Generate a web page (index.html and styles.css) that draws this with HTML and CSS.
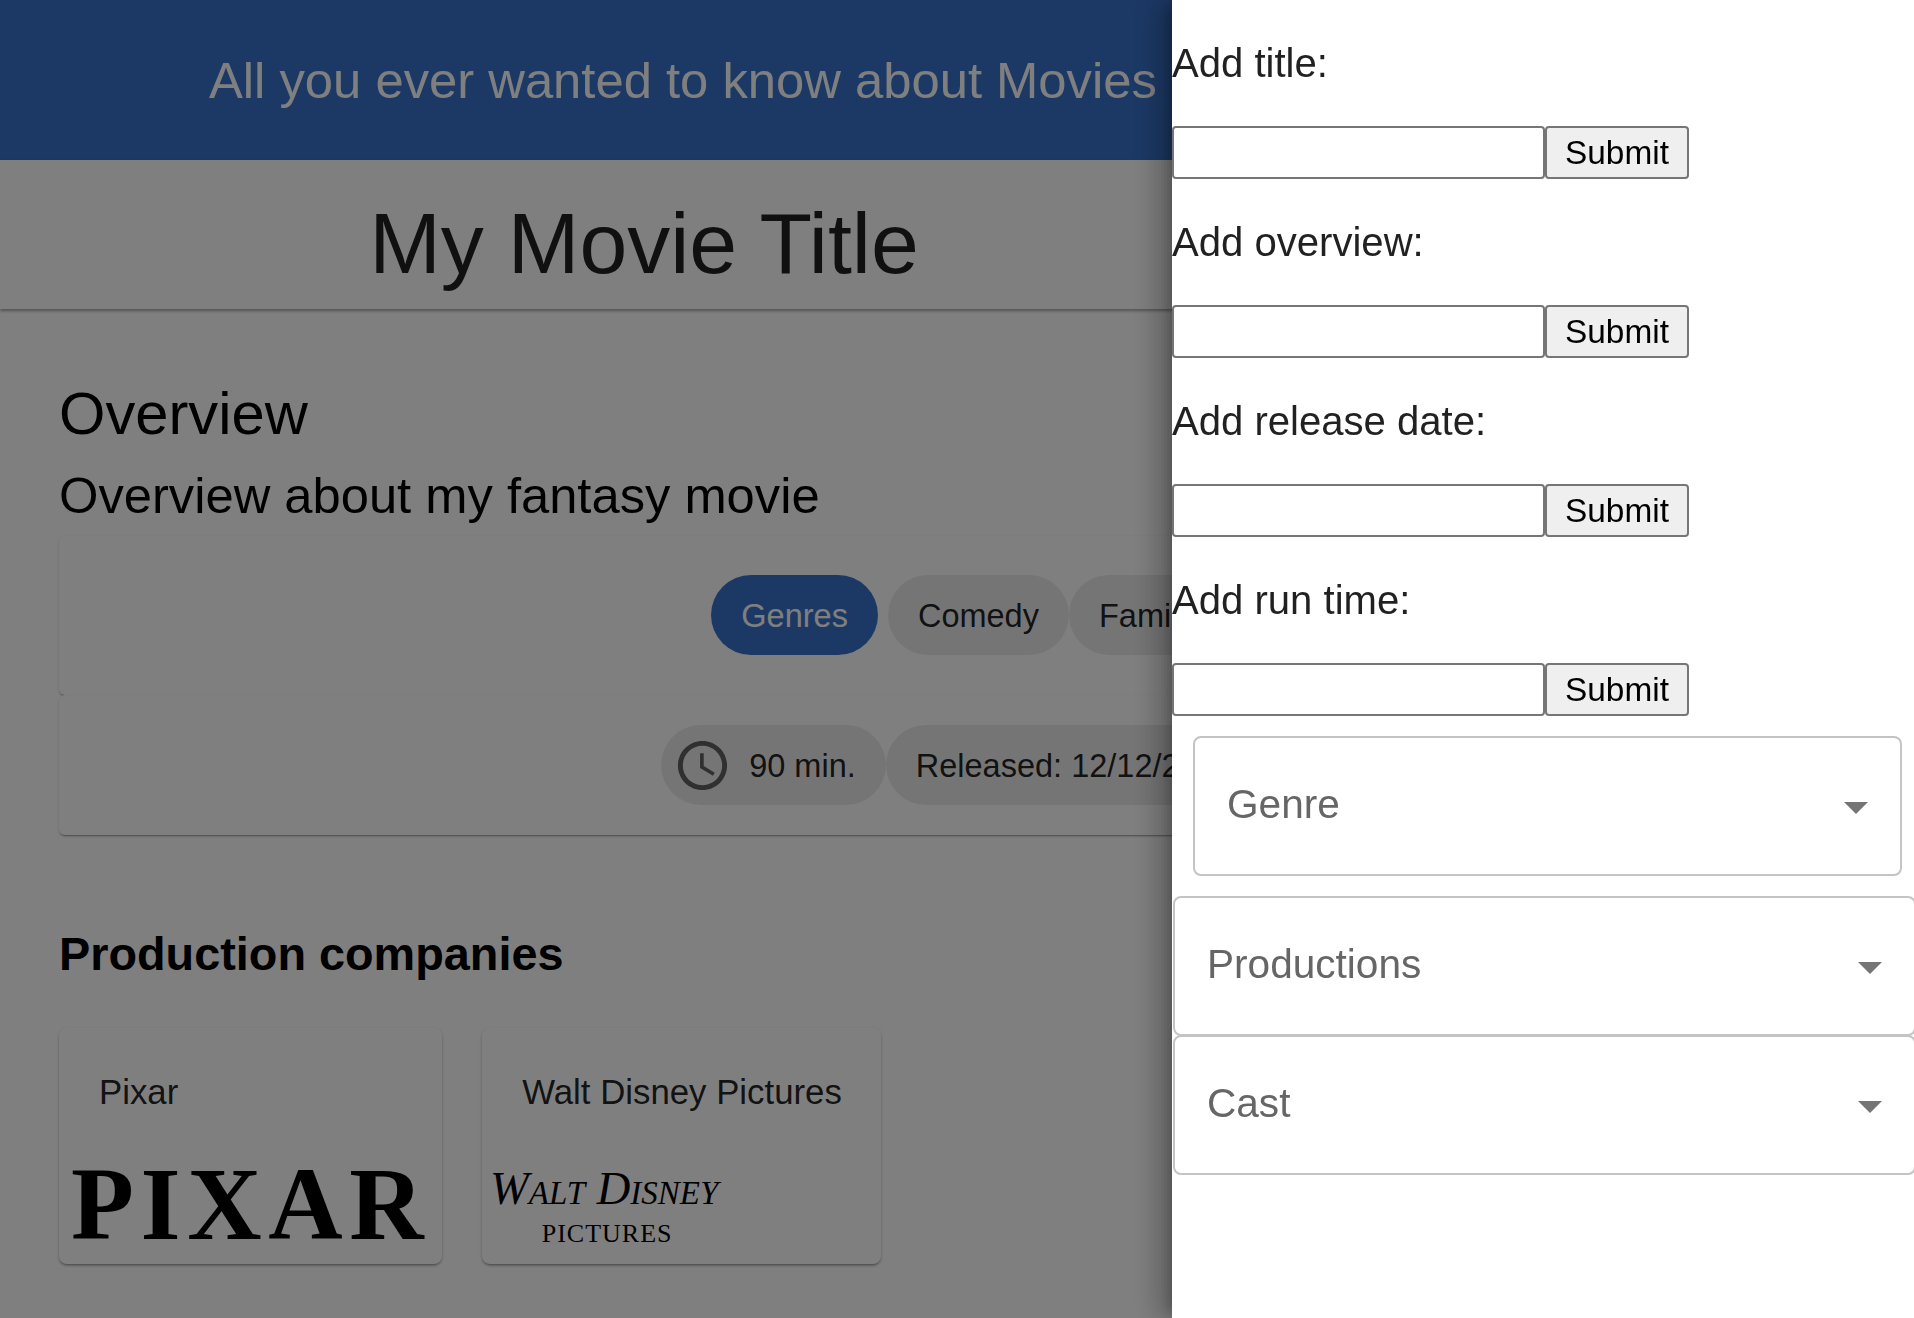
FILE: index.html
```html
<!DOCTYPE html>
<html lang="en">
<head>
  <meta charset="UTF-8" />
  <title>Movies</title>
  <link rel="stylesheet" href="styles.css">
</head>
<body>
  <div class="page">
    <header class="top-bar">
      <h3>All you ever wanted to know about Movies</h3>
    </header>
    <div class="title-bar">
      <h1>My Movie Title</h1>
    </div>
    <main class="content">
      <h2 class="overview-head">Overview</h2>
      <p class="overview-text">Overview about my fantasy movie</p>

      <div class="chip-card genres-card">
        <span class="chip chip-primary">Genres</span>
        <span class="chip">Comedy</span>
        <span class="chip">Family</span>
      </div>
      <div class="chip-card facts-card">
        <span class="chip chip-icon">
          <svg viewBox="0 0 24 24" class="clock">
            <path d="M11.99 2C6.47 2 2 6.48 2 12s4.47 10 9.99 10C17.52 22 22 17.52 22 12S17.52 2 11.99 2zM12 20c-4.42 0-8-3.58-8-8s3.58-8 8-8 8 3.58 8 8-3.58 8-8 8z"/>
            <path d="M12.5 7H11v6l5.25 3.15.75-1.23-4.5-2.67z"/>
          </svg>
          90 min.
        </span>
        <span class="chip">Released: 12/12/2022</span>
      </div>

      <h4 class="companies-head">Production companies</h4>
      <div class="companies">
        <div class="company">
          <div class="company-name">Pixar</div>
          <div class="logo-pixar">PIXAR</div>
        </div>
        <div class="company">
          <div class="company-name">Walt Disney Pictures</div>
          <div class="logo-disney">
            <span class="disney-top">Walt Disney</span>
            <span class="disney-sub">PICTURES</span>
          </div>
        </div>
      </div>
    </main>
  </div>

  <div class="backdrop"></div>

  <aside class="drawer">
    <form class="add-form">
      <p class="add-label">Add title:</p>
      <div class="add-row"><input type="text" /><button type="button">Submit</button></div>
      <p class="add-label">Add overview:</p>
      <div class="add-row"><input type="text" /><button type="button">Submit</button></div>
      <p class="add-label">Add release date:</p>
      <div class="add-row"><input type="text" /><button type="button">Submit</button></div>
      <p class="add-label">Add run time:</p>
      <div class="add-row"><input type="text" /><button type="button">Submit</button></div>
    </form>
    <div class="select select-genre"><span>Genre</span><i class="caret"></i></div>
    <div class="select select-wide"><span>Productions</span><i class="caret"></i></div>
    <div class="select select-wide select-cast"><span>Cast</span><i class="caret"></i></div>
  </aside>
</body>
</html>
```

FILE: styles.css
```css
html, body {
  margin: 0;
  height: 100%;
  overflow: hidden;
}

body {
  font-family: "Liberation Sans", Arial, sans-serif;
  background-color: #fff;
  color: #000;
}

.page {
  width: 1914px;
}

.top-bar {
  height: 160px;
  background-color: #3872cc;
  color: #fff;
  display: flex;
  align-items: center;
  padding-left: 209px;
  box-sizing: border-box;
}

.top-bar h3 {
  margin: 0;
  font-size: 50.75px;
  font-weight: 400;
  white-space: nowrap;
}

.title-bar {
  height: 149px;
  padding: 17px 626px 0 0;
  box-sizing: border-box;
  display: flex;
  align-items: center;
  justify-content: center;
  box-shadow: 0 2px 3px rgba(0, 0, 0, 0.35);
}

.title-bar h1 {
  margin: 0;
  font-size: 86px;
  font-weight: 400;
  color: rgba(0, 0, 0, 0.87);
}

.content {
  padding: 0 60px 0 59px;
}

.overview-head {
  margin: 64px 0 0;
  font-size: 59.7px;
  line-height: 82px;
  font-weight: 400;
}

.overview-text {
  margin: 9px 0 8px;
  font-size: 50.7px;
  line-height: 64px;
}

.chip-card {
  background-color: #fff;
  border-radius: 6px;
  display: flex;
  justify-content: center;
  box-sizing: border-box;
  box-shadow: 0 2px 2px -1px rgba(0, 0, 0, 0.35), 0 1px 3px rgba(0, 0, 0, 0.12);
}

.genres-card {
  height: 159px;
  padding: 39px 0 0 23px;
}

.facts-card {
  height: 140px;
  padding: 30px 0 0 12px;
}

.chip {
  height: 80px;
  padding: 3px 30px 0;
  border-radius: 40px;
  background-color: #ebebeb;
  color: rgba(0, 0, 0, 0.87);
  font-size: 32.5px;
  display: inline-flex;
  align-items: center;
  box-sizing: border-box;
}

.chip-primary {
  background-color: #3872cc;
  color: #fff;
  margin-right: 10px;
}

.chip-icon {
  padding-left: 12px;
}

.clock {
  width: 59px;
  height: 59px;
  margin: -3px 17px 0 0;
  fill: #616161;
}

.companies-head {
  margin: 84px 0 0;
  font-size: 46.8px;
  line-height: 70px;
  font-weight: 700;
}

.companies {
  display: flex;
  gap: 40px;
  margin-top: 39px;
}

.company {
  height: 236px;
  padding: 0 12px;
  box-sizing: border-box;
  border-radius: 8px;
  background-color: #fff;
  box-shadow: 0 2px 3px -1px rgba(0, 0, 0, 0.45), 0 1px 4px rgba(0, 0, 0, 0.1);
}

.company-name {
  padding: 43px 27px 0 28px;
  font-size: 34.8px;
  line-height: 42px;
  color: rgba(0, 0, 0, 0.87);
  white-space: nowrap;
}

.logo-pixar {
  margin-top: 44px;
  font-family: "Liberation Serif", serif;
  font-weight: 700;
  font-size: 103px;
  line-height: 94px;
  letter-spacing: 6.6px;
  white-space: nowrap;
}

.logo-disney {
  margin-top: 51px;
  font-family: "Liberation Serif", serif;
  display: flex;
  flex-direction: column;
  width: 226px;
  align-items: center;
}

.disney-top {
  margin-left: -6px;
  font-style: italic;
  font-variant: small-caps;
  font-size: 46.5px;
  line-height: 50px;
  white-space: nowrap;
}

.disney-sub {
  margin-top: 6px;
  font-size: 26px;
  line-height: 28px;
  letter-spacing: 1px;
}

.backdrop {
  position: fixed;
  inset: 0;
  background-color: rgba(0, 0, 0, 0.5);
}

.drawer {
  position: fixed;
  top: 0;
  right: 0;
  bottom: 0;
  width: 742px;
  background-color: #fff;
  box-shadow: -8px 0 10px -5px rgba(0, 0, 0, 0.2), -16px 0 24px 2px rgba(0, 0, 0, 0.14), -6px 0 30px 5px rgba(0, 0, 0, 0.12);
  overflow: hidden;
}

.add-label {
  margin: 0;
  height: 126px;
  padding-top: 40px;
  box-sizing: border-box;
  font-size: 40.1px;
  line-height: 46px;
  color: rgba(0, 0, 0, 0.87);
}

.add-row {
  height: 53px;
  display: flex;
}

.add-row input {
  width: 373px;
  height: 53px;
  margin: 0;
  padding: 0;
  border: 2px solid #767676;
  border-radius: 4px;
  box-sizing: border-box;
  background-color: #fff;
}

.add-row button {
  width: 144px;
  height: 53px;
  padding: 0;
  border: 2px solid #767676;
  border-radius: 4px;
  box-sizing: border-box;
  background-color: #efefef;
  color: #000;
  font-family: "Liberation Sans", Arial, sans-serif;
  font-size: 33.4px;
}

.select {
  height: 140px;
  box-sizing: border-box;
  border: 2px solid #c4c4c4;
  border-radius: 8px;
  background-color: #fff;
  color: #666;
  font-size: 40.6px;
  display: flex;
  align-items: center;
  justify-content: space-between;
}

.select span {
  margin-top: -3px;
}

.select-genre {
  width: 709px;
  margin: 20px 0 20px 21px;
  padding: 0 32px;
}

.select-wide {
  width: 743px;
  margin-left: 1px;
  padding: 0 32px;
}

.select-cast {
  margin-top: -1px;
}

.caret {
  width: 0;
  height: 0;
  border-left: 12px solid transparent;
  border-right: 12px solid transparent;
  border-top: 12px solid #757575;
  margin-top: 3px;
}
```
